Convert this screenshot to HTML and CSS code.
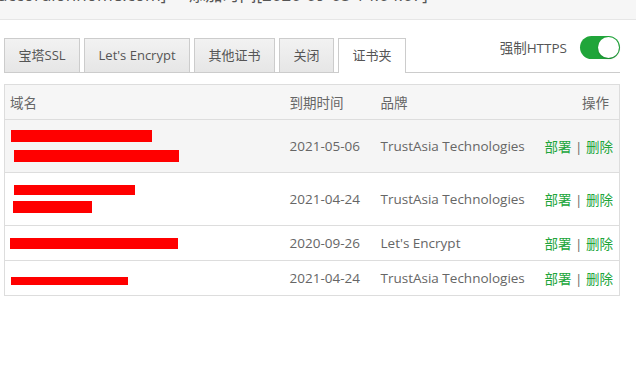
FILE: index.html
```html
<!DOCTYPE html>
<html lang="zh">
<head>
<meta charset="utf-8">
<link rel="stylesheet" href="styles.css">
</head>
<body>
<div class="top"><span class="top-text">accordionhome.com]&nbsp;&nbsp;&nbsp;&nbsp;&nbsp;添加时间[2020-09-05 14:04:07]</span></div>
<div class="content">
  <div class="tabbar">
    <div class="tab">宝塔SSL</div>
    <div class="tab">Let's Encrypt</div>
    <div class="tab">其他证书</div>
    <div class="tab">关闭</div>
    <div class="tab active">证书夹</div>
    <div class="force">
      <span class="force-label">强制HTTPS</span>
      <span class="switch"><span class="knob"></span></span>
    </div>
  </div>
  <table class="tbl">
    <colgroup>
      <col class="c1"><col class="c2"><col class="c3"><col class="c4">
    </colgroup>
    <thead>
      <tr><th>域名</th><th>到期时间</th><th>品牌</th><th class="r">操作</th></tr>
    </thead>
    <tbody>
      <tr class="hover tall">
        <td><div class="names"><span class="red" style="width:141px;margin-left:1px"></span><span class="red" style="width:165px;margin-left:4px;margin-top:8px"></span></div></td>
        <td>2021-05-06</td><td>TrustAsia Technologies</td>
        <td class="r"><a class="op">部署</a> | <a class="op">删除</a></td>
      </tr>
      <tr class="tall">
        <td><div class="names"><span class="red" style="width:121px;height:10px;margin-left:4px"></span><span class="red" style="width:79px;margin-left:3px;margin-top:6px"></span></div></td>
        <td>2021-04-24</td><td>TrustAsia Technologies</td>
        <td class="r"><a class="op">部署</a> | <a class="op">删除</a></td>
      </tr>
      <tr>
        <td><div class="names"><span class="red" style="width:168px;height:11px"></span></div></td>
        <td>2020-09-26</td><td>Let's Encrypt</td>
        <td class="r"><a class="op">部署</a> | <a class="op">删除</a></td>
      </tr>
      <tr>
        <td><div class="names"><span class="red" style="width:117px;height:8px;margin-left:1px;margin-top:6px"></span></div></td>
        <td>2021-04-24</td><td>TrustAsia Technologies</td>
        <td class="r"><a class="op">部署</a> | <a class="op">删除</a></td>
      </tr>
    </tbody>
  </table>
</div>
</body>
</html>
```
FILE: styles.css
```css
* { box-sizing: border-box; }
body {
  margin: 0;
  background: #fff;
  font-family: "Open Sans", "Noto Sans CJK SC", sans-serif;
  font-size: 13.5px;
  color: #666;
}
.top {
  height: 20px;
  background: #f6f6f6;
  border-bottom: 1px solid #e6e6e6;
  overflow: hidden;
}
.top-text {
  display: block;
  margin-top: -15px;
  margin-left: -2px;
  font-size: 17px;
  line-height: 20px;
  color: #555;
  white-space: nowrap;
}
.content {
  padding: 18px 16px 0 4px;
}
.tabbar {
  display: flex;
  align-items: flex-end;
  border-bottom: 1px solid #ccc;
  height: 35px;
}
.tab {
  height: 34px;
  line-height: 32px;
  padding: 0 13.5px;
  margin-right: 4px;
  border: 1px solid #ccc;
  border-bottom: none;
  background: linear-gradient(#f2f2f2, #e6e6e6);
  color: #555;
  font-size: 13px;
  white-space: nowrap;
}
.tab.active {
  background: #fff;
  height: 35px;
  margin-bottom: -1px;
  color: #555;
}
.force {
  margin-left: auto;
  align-self: flex-start;
  display: flex;
  align-items: center;
  height: 28px;
  margin-top: -5px;
}
.force-label {
  color: #555;
  margin-right: 13px;
}
.switch {
  position: relative;
  width: 40px;
  height: 23px;
  border-radius: 12px;
  background: #20a53a;
}
.knob {
  position: absolute;
  right: 1px;
  top: 1px;
  width: 21px;
  height: 21px;
  border-radius: 50%;
  background: #fff;
  box-shadow: 0 1px 2px rgba(0,0,0,0.2);
}
.tbl {
  margin-top: 11px;
  width: 616px;
  border-collapse: collapse;
  table-layout: fixed;
  border: 1px solid #ddd;
}
.c1 { width: 275px; }
.c2 { width: 91px; }
.c3 { width: 164px; }
.c4 { width: auto; }
th {
  height: 35px;
  background: #f6f6f6;
  font-weight: normal;
  text-align: left;
  padding: 0 10px;
  color: #666;
  border-bottom: 1px solid #ddd;
}
td {
  height: 35px;
  padding: 0 10px;
  border-bottom: 1px solid #ddd;
  color: #666;
  white-space: nowrap;
}
td:first-child, th:first-child { padding-left: 5px; }
tr.tall td { height: 53px; }
tr.hover td { background: #f5f5f5; }
.r { text-align: right; }
.names {
  display: flex;
  flex-direction: column;
  align-items: flex-start;
}
.red {
  display: block;
  height: 12px;
  background: #ff0000;
}
.op {
  color: #20a53a;
  text-decoration: none;
}
```
